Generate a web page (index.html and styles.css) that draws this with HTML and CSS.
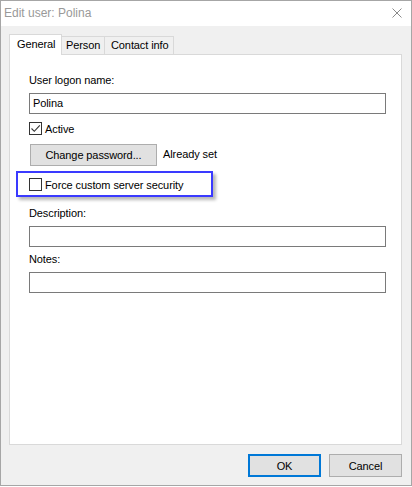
FILE: index.html
```html
<!DOCTYPE html>
<html>
<head>
<meta charset="utf-8">
<link rel="stylesheet" href="styles.css">
</head>
<body>
<div class="window">
  <div class="titlebar">
    <span class="title">Edit user: Polina</span>
    <svg class="close" width="10" height="10" viewBox="0 0 10 10"><path d="M0.5 0.5 L9.5 9.5 M9.5 0.5 L0.5 9.5" stroke="#8a8a8a" stroke-width="1" fill="none"/></svg>
  </div>
  <div class="client">
    <div class="tabs">
      <div class="tab active">General</div>
      <div class="tab">Person</div>
      <div class="tab">Contact info</div>
    </div>
    <div class="panel">
      <div class="label">User logon name:</div>
      <div class="textbox">Polina</div>
      <div class="check-row active-row">
        <span class="checkbox">
          <svg width="11" height="11" viewBox="0 0 11 11"><path d="M1.5 5.5 L4.3 8.3 L9.8 2.3" stroke="#333" stroke-width="1.1" fill="none"/></svg>
        </span>
        <span class="check-label">Active</span>
      </div>
      <div class="pw-row">
        <div class="button pw-btn">Change password...</div>
        <span class="pw-status">Already set</span>
      </div>
      <div class="highlight">
        <div class="check-row">
          <span class="checkbox"></span>
          <span class="check-label">Force custom server security</span>
        </div>
      </div>
      <div class="label desc-label">Description:</div>
      <div class="textbox"></div>
      <div class="label notes-label">Notes:</div>
      <div class="textbox"></div>
    </div>
    <div class="footer">
      <div class="button ok">OK</div>
      <div class="button cancel">Cancel</div>
    </div>
  </div>
</div>
</body>
</html>
```
FILE: styles.css
```css
html, body {
  margin: 0;
  padding: 0;
  background: #ffffff;
}
body {
  font-family: "Liberation Sans", Arial, sans-serif;
  font-size: 11px;
  color: #000;
  letter-spacing: -0.1px;
}
.window {
  box-sizing: border-box;
  width: 412px;
  height: 486px;
  border: 1px solid #a6a6a6;
  background: #f0f0f0;
  display: flex;
  flex-direction: column;
}
.titlebar {
  height: 25px;
  background: #ffffff;
  display: flex;
  align-items: center;
  justify-content: space-between;
  padding: 0 9px 0 3px;
  flex: none;
}
.title {
  font-size: 12px;
  letter-spacing: 0;
  color: #999999;
  margin-top: -2px;
}
.close {
  display: block;
  margin-top: -1px;
}
.client {
  flex: 1;
  display: flex;
  flex-direction: column;
  padding: 8px 9px 0 8px;
}
.tabs {
  display: flex;
  align-items: flex-end;
  height: 20px;
  position: relative;
  z-index: 1;
}
.tab {
  box-sizing: border-box;
  height: 18px;
  border: 1px solid #d9d9d9;
  border-bottom: none;
  background: #f0f0f0;
  line-height: 17px;
  white-space: nowrap;
  margin-left: -1px;
}
.tab:nth-child(2) { width: 44px; padding-left: 4px; }
.tab:nth-child(3) { width: 70px; padding-left: 6px; }
.tab.active {
  height: 21px;
  margin-bottom: -1px;
  background: #ffffff;
  margin-left: 0;
  width: 53px;
  padding-left: 7px;
  line-height: 19px;
}
.panel {
  box-sizing: border-box;
  height: 391px;
  background: #ffffff;
  border: 1px solid #d9d9d9;
  padding: 18px 15px 0 19px;
  display: flex;
  flex-direction: column;
  flex: none;
}
.label {
  line-height: 15px;
  height: 15px;
}
.textbox {
  box-sizing: border-box;
  height: 21px;
  border: 1px solid #7a7a7a;
  margin-top: 5px;
  padding: 0 3px;
  line-height: 19px;
}
.check-row {
  display: flex;
  align-items: center;
  height: 15px;
}
.active-row {
  margin-top: 7px;
}
.checkbox {
  box-sizing: border-box;
  width: 13px;
  height: 13px;
  border: 1px solid #333333;
  background: #ffffff;
  display: flex;
  align-items: center;
  justify-content: center;
  flex: none;
}
.checkbox svg { display: block; }
.check-label {
  margin-left: 3px;
}
.pw-row {
  display: flex;
  align-items: center;
  margin-top: 8px;
}
.button {
  box-sizing: border-box;
  height: 22px;
  background: #e1e1e1;
  border: 1px solid #adadad;
  display: flex;
  align-items: center;
  justify-content: center;
}
.pw-btn {
  width: 127px;
  margin-left: 1px;
}
.pw-status {
  margin-left: 6px;
  margin-top: -2px;
}
.highlight {
  box-sizing: border-box;
  width: 197px;
  height: 26px;
  margin-left: -13px;
  margin-top: 5px;
  border: 2px solid #3a3aff;
  box-shadow: 3px 3px 3px rgba(0, 0, 0, 0.28);
  padding: 4px 0 0 11px;
}
.desc-label {
  margin-top: 9px;
}
.notes-label {
  margin-top: 5px;
}
.footer {
  display: flex;
  justify-content: flex-end;
  gap: 8px;
  padding-top: 9px;
}
.footer .button {
  width: 73px;
  height: 23px;
}
.ok {
  border: 2px solid #0078d7;
}
```
